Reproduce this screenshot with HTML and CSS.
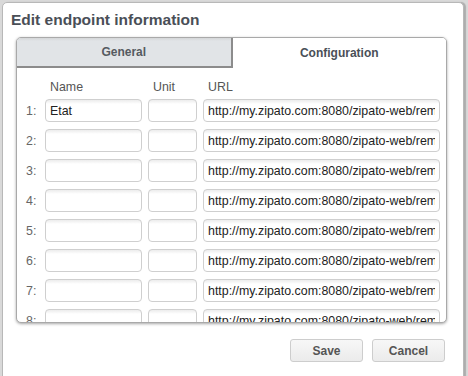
FILE: index.html
```html
<!DOCTYPE html>
<html lang="en">
<head>
  <meta charset="UTF-8" />
  <title>Edit endpoint information</title>
  <link rel="stylesheet" href="styles.css">
</head>
<body>

  <!-- dialog -->
  <div class="dialog">
    <div class="dialog-title">Edit endpoint information</div>

    <div class="tab-panel">
      <div class="tabs">
        <div class="tab">General</div>
        <div class="tab active">Configuration</div>
      </div>

      <div class="tab-body">
        <div class="grid">
          <div class="head-spacer"></div>
          <div class="col-head">Name</div>
          <div class="col-head">Unit</div>
          <div class="col-head">URL</div>

          <div class="num">1:</div>
          <input class="field" type="text" value="Etat" />
          <input class="field" type="text" value="" />
          <input class="field" type="text" value="http://my.zipato.com:8080/zipato-web/remoting/attribute/set" />

          <div class="num">2:</div>
          <input class="field" type="text" value="" />
          <input class="field" type="text" value="" />
          <input class="field" type="text" value="http://my.zipato.com:8080/zipato-web/remoting/attribute/set" />

          <div class="num">3:</div>
          <input class="field" type="text" value="" />
          <input class="field" type="text" value="" />
          <input class="field" type="text" value="http://my.zipato.com:8080/zipato-web/remoting/attribute/set" />

          <div class="num">4:</div>
          <input class="field" type="text" value="" />
          <input class="field" type="text" value="" />
          <input class="field" type="text" value="http://my.zipato.com:8080/zipato-web/remoting/attribute/set" />

          <div class="num">5:</div>
          <input class="field" type="text" value="" />
          <input class="field" type="text" value="" />
          <input class="field" type="text" value="http://my.zipato.com:8080/zipato-web/remoting/attribute/set" />

          <div class="num">6:</div>
          <input class="field" type="text" value="" />
          <input class="field" type="text" value="" />
          <input class="field" type="text" value="http://my.zipato.com:8080/zipato-web/remoting/attribute/set" />

          <div class="num">7:</div>
          <input class="field" type="text" value="" />
          <input class="field" type="text" value="" />
          <input class="field" type="text" value="http://my.zipato.com:8080/zipato-web/remoting/attribute/set" />

          <div class="num">8:</div>
          <input class="field" type="text" value="" />
          <input class="field" type="text" value="" />
          <input class="field" type="text" value="http://my.zipato.com:8080/zipato-web/remoting/attribute/set" />
        </div>
      </div>
    </div>

    <div class="buttons">
      <button class="btn">Save</button>
      <button class="btn">Cancel</button>
    </div>
  </div>

</body>
</html>
```

FILE: styles.css
```css
* {
  margin: 0;
  padding: 0;
  box-sizing: border-box;
}

body {
  font-family: "Liberation Sans", Arial, sans-serif;
  background-color: #d9d9d9;
  color: #333;
  overflow: hidden;
  height: 376px;
}

/* dialog */
.dialog {
  width: 462px;
  height: 380px;
  margin: 2px 0 0 2px;
  background-color: #fff;
  border: 1px solid #b8b8b8;
  border-radius: 5px;
  box-shadow: 2px 0 1px rgba(0, 0, 0, 0.2);
  padding: 8px 0 0 13px;
}

.dialog-title {
  font-size: 15.5px;
  font-weight: bold;
  color: #4a4f57;
  margin-left: -5px;
  height: 26px;
}

/* tab panel */
.tab-panel {
  width: 431px;
  height: 286px;
  border: 1px solid #a9a9a9;
  border-radius: 5px;
  box-shadow: 0 1px 3px rgba(0, 0, 0, 0.35);
  overflow: hidden;
  background-color: #fff;
}

.tabs {
  display: flex;
  height: 30px;
}

.tab {
  flex: 1;
  display: flex;
  align-items: center;
  justify-content: center;
  font-size: 12px;
  font-weight: bold;
  color: #555a61;
  background: linear-gradient(#d4d6d8, #e1e4e7 3px, #e1e4e7);
  border-right: 2px solid #8c8c8c;
  border-bottom: 2px solid #8c8c8c;
}

.tab.active {
  background: #fff;
  border: none;
  color: #4a4f57;
}

.tab-body {
  padding: 12px 0 0 5px;
}

.grid {
  display: grid;
  grid-template-columns: 17px 97px 49px 237px;
  column-gap: 6px;
  row-gap: 7px;
  align-items: center;
}

.head-spacer {
  height: 12px;
}

.col-head {
  font-size: 12.4px;
  color: #555;
  padding-left: 5px;
  margin-bottom: -2px;
}

.num {
  font-size: 12.4px;
  color: #666;
  padding-left: 4px;
}

.field {
  height: 23px;
  border: 1px solid #cfcfcf;
  border-radius: 4px;
  background: linear-gradient(#ececec, #fff 4px, #fff);
  font-family: "Liberation Sans", Arial, sans-serif;
  font-size: 12.4px;
  color: #222;
  padding: 0 4px;
  outline: none;
}

/* buttons */
.buttons {
  display: flex;
  justify-content: flex-end;
  gap: 9px;
  width: 431px;
  padding-top: 16px;
  padding-right: 2px;
}

.btn {
  width: 73px;
  height: 23px;
  border: 1px solid #cdcdcd;
  border-radius: 3px;
  background: linear-gradient(#f7f7f7, #ebebeb);
  font-family: "Liberation Sans", Arial, sans-serif;
  font-size: 12px;
  font-weight: bold;
  color: #555;
}
```
